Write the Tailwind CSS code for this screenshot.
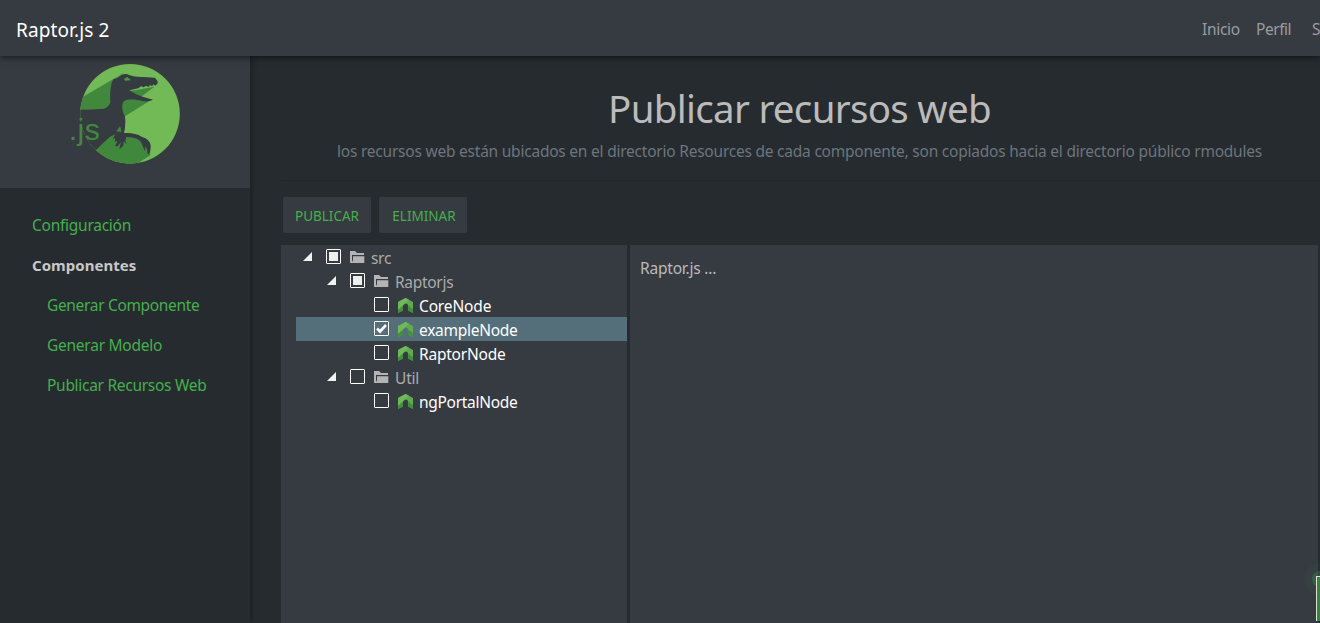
<!DOCTYPE html>
<html lang="es">
<head>
<meta charset="utf-8">
<title>Raptor.js 2</title>
<script src="https://cdn.jsdelivr.net/npm/@tailwindcss/browser@4"></script>
</head>
<body class="w-[1320px] h-[623px] overflow-hidden bg-[#262b2f] font-['Noto_Sans','Open_Sans',sans-serif] text-[15.5px] leading-6 text-[#bbbbbb] flex flex-col">
<svg class="hidden">
  <symbol id="arrow" viewBox="0 0 9 9"><path d="M9 0V9H0Z" fill="#f2f2f2"/></symbol>
  <symbol id="folder" viewBox="0 0 15 13"><path d="M0 0H5L7 2H14V4H2V12H0Z" fill="#b4b4b4"/><path d="M3 5.300H14.300V12H1.500L3 9Z" fill="#b4b4b4"/></symbol>
  <symbol id="node" viewBox="0 0 15 15"><path d="M0 4L7.500 0L15 4V15L10 12.500V7.500Q10 5.500 7.500 5.500T5 7.500V12.500L0 15Z" fill="#60ab4c"/><path d="M0 4L7.500 0L11 1.800L5 7.500L0 12Z" fill="#70b957"/><path d="M0 15V12L5 7.500V12.500Z" fill="#438f3e"/><path d="M10 7.500L15 11V15L10 12.500Z" fill="#438f3e"/></symbol>
</svg>

<nav class="relative z-10 h-14 shrink-0 bg-[#363a41] shadow-[0_2px_6px_rgba(0,0,0,0.5)] flex items-center pl-4 whitespace-nowrap">
  <a class="w-[1186px] shrink-0 text-[19px] text-white pt-1"><span class="tracking-[0.12px]">Raptor.js 2</span></a>
  <div class="flex shrink-0 text-[#999ca0] pt-0.5"><span class="w-[54px] tracking-[-0.3px]">Inicio</span><span class="w-[56px] tracking-[-0.45px]">Perfil</span><span>Salir</span></div>
</nav>

<div class="flex flex-1 min-h-0">
  <aside class="w-[250px] shrink-0 shadow-[2px_0_5px_rgba(0,0,0,0.25)]">
    <div class="h-[132px] bg-[#363a41] pl-[70px] pt-[7px]">
      <svg class="w-[110px] h-[102px]" viewBox="30 39 330 306">
        <clipPath id="disc"><circle cx="210" cy="191.500" r="149.500"/></clipPath>
        <g clip-path="url(#disc)">
          <rect x="50" y="40" width="320" height="310" fill="#72ba55"/>
          <path d="M50 151L190 70V180H50Z" fill="#40883c"/>
          <path d="M204 122L225 121L283 110L243 141Z" fill="#40883c"/>
          <path d="M183 148H277L195 199H183Z" fill="#40883c"/>
          <path d="M150 235L196 249L245 262L268 280L271 316L225 345H80V290Z" fill="#40883c"/>
          <path d="M160 88Q176 84 186 75Q197 69 209 76Q225 82 250 81L285 83Q295 94 293 100L286 107L281 103L276 109L271 105L265 111L258 107L251 112L243 109L235 115L208 121Q228 135 248 140L279 149Q262 158 244 152Q215 146 198 150Q186 156 187 168Q185 183 195 200Q198 225 192 249Q225 247 245 260Q270 267 272 287Q273 304 267 313Q261 313 262 301L256 288L255 304L248 288Q244 273 231 266Q215 260 199 261L196 272L200 283L191 274L190 287L178 298L183 276L173 289L165 289L173 272L164 276L166 263L158 267L166 253L150 260Q130 277 106 302L40 330V179H60Q96 179 132 176Q146 170 151 158Q148 110 160 88Z" fill="#363a41"/>
          <path d="M169 244L180 228L185 246Z" fill="#40883c"/>
          <path d="M192 87L202 81L213 91L195 92Z" fill="#4b9842"/>
        </g>
        <text x="26" y="271" font-family="Liberation Sans" font-size="91" fill="#40883c" textLength="94">.js</text>
      </svg>
    </div>
    <ul class="pl-8 pt-[17px] leading-10 text-[#43b14b] whitespace-nowrap">
      <li><span class="tracking-[-0.26px]">Configuración</span></li>
      <li class="font-bold text-[#c8c8c8]"><span class="text-[15px] tracking-[0.03px]">Componentes</span></li>
      <li class="pl-[15px]"><span class="tracking-[-0.33px]">Generar Componente</span></li>
      <li class="pl-[15px]"><span class="tracking-[-0.25px]">Generar Modelo</span></li>
      <li class="pl-[15px]"><span class="tracking-[-0.29px]">Publicar Recursos Web</span></li>
    </ul>
  </aside>

  <main class="flex-1 min-w-0 pl-[31px] flex flex-col whitespace-nowrap">
    <header class="h-[125px] shrink-0 border-b border-[#222529] text-center pt-7 pr-0.5">
      <h1 class="text-[38.5px] leading-[48px]"><span class="tracking-[-0.7px]">Publicar recursos web</span></h1>
      <p class="mt-[7px] text-[#6c757d]"><span class="tracking-[-0.225px]">los recursos web están ubicados en el directorio Resources de cada componente, son copiados hacia el directorio público rmodules</span></p>
    </header>
    <div class="flex gap-2 pl-[2px] pt-4 pb-3 text-[13.5px] text-[#43b14b]">
      <button class="w-[88px] h-9 pt-0.5 rounded-[2px] bg-[#363a41]">PUBLICAR</button>
      <button class="w-[88px] h-9 pt-0.5 pl-0.5 rounded-[2px] bg-[#363a41]">ELIMINAR</button>
    </div>
    <div class="flex gap-[3px] flex-1">
      <ul class="w-[346px] bg-[#363a41] pl-[15px] text-white">
        <li class="h-6 flex items-start pl-[7px] text-[#aaaaaa]"><svg class="w-[9px] h-[9px] mt-[7px]"><use href="#arrow"/></svg><i class="w-[15px] h-[15px] ml-[14px] mt-1 border border-white rounded-[1px] p-[2px]"><b class="block size-full bg-[#eeeeee]"></b></i><svg class="w-[15px] h-[13px] ml-[9px] mt-1.5"><use href="#folder"/></svg><span class="ml-1.5 pt-px tracking-[-0.3px]">src</span></li>
        <li class="h-6 flex items-start pl-[31px] text-[#aaaaaa]"><svg class="w-[9px] h-[9px] mt-[7px]"><use href="#arrow"/></svg><i class="w-[15px] h-[15px] ml-[14px] mt-1 border border-white rounded-[1px] p-[2px]"><b class="block size-full bg-[#eeeeee]"></b></i><svg class="w-[15px] h-[13px] ml-[9px] mt-1.5"><use href="#folder"/></svg><span class="ml-1.5 pt-px tracking-[-0.3px]">Raptorjs</span></li>
        <li class="h-6 flex items-start pl-[78px]"><i class="w-[15px] h-[15px] mt-1 border border-white rounded-[1px]"></i><svg class="size-[15px] ml-[9px] mt-[5px]"><use href="#node"/></svg><span class="ml-1.5 pt-px tracking-[-0.15px]">CoreNode</span></li>
        <li class="h-6 flex items-start pl-[78px] bg-[#546e7a]"><i class="w-[15px] h-[15px] mt-1 border border-white rounded-[1px]"><svg class="size-[13px]" viewBox="0 0 13 13"><path d="M2 6.500L5 9.500L11 3" fill="none" stroke="#fff" stroke-width="2.600"/></svg></i><svg class="size-[15px] ml-[9px] mt-[5px]"><use href="#node"/></svg><span class="ml-1.5 pt-px tracking-[-0.28px]">exampleNode</span></li>
        <li class="h-6 flex items-start pl-[78px]"><i class="w-[15px] h-[15px] mt-1 border border-white rounded-[1px]"></i><svg class="size-[15px] ml-[9px] mt-[5px]"><use href="#node"/></svg><span class="ml-1.5 pt-px tracking-[-0.22px]">RaptorNode</span></li>
        <li class="h-6 flex items-start pl-[31px] text-[#aaaaaa]"><svg class="w-[9px] h-[9px] mt-[7px]"><use href="#arrow"/></svg><i class="w-[15px] h-[15px] ml-[14px] mt-1 border border-white rounded-[1px]"></i><svg class="w-[15px] h-[13px] ml-[9px] mt-1.5"><use href="#folder"/></svg><span class="ml-1.5 pt-px tracking-[-0.2px]">Util</span></li>
        <li class="h-6 flex items-start pl-[78px]"><i class="w-[15px] h-[15px] mt-1 border border-white rounded-[1px]"></i><svg class="size-[15px] ml-[9px] mt-[5px]"><use href="#node"/></svg><span class="ml-1.5 pt-px tracking-[-0.3px]">ngPortalNode</span></li>
      </ul>
      <section class="w-[688px] bg-[#363a41] pl-2.5 pt-[11px]"><span class="tracking-[-0.2px]">Raptor.js ...</span></section>
    </div>
  </main>
</div>

<div class="absolute left-[1304px] top-[563px] w-4 h-8 overflow-hidden"><div class="size-8 rounded-full bg-[#43b14b]/5 p-2"><div class="size-full rounded-full bg-[#43b14b]/25"></div></div></div>
<div class="absolute left-[1316px] top-[576px] w-1 h-[45px] border-l border-t border-[#dddddd] bg-[#2e8b32]"></div>
</body>
</html>
